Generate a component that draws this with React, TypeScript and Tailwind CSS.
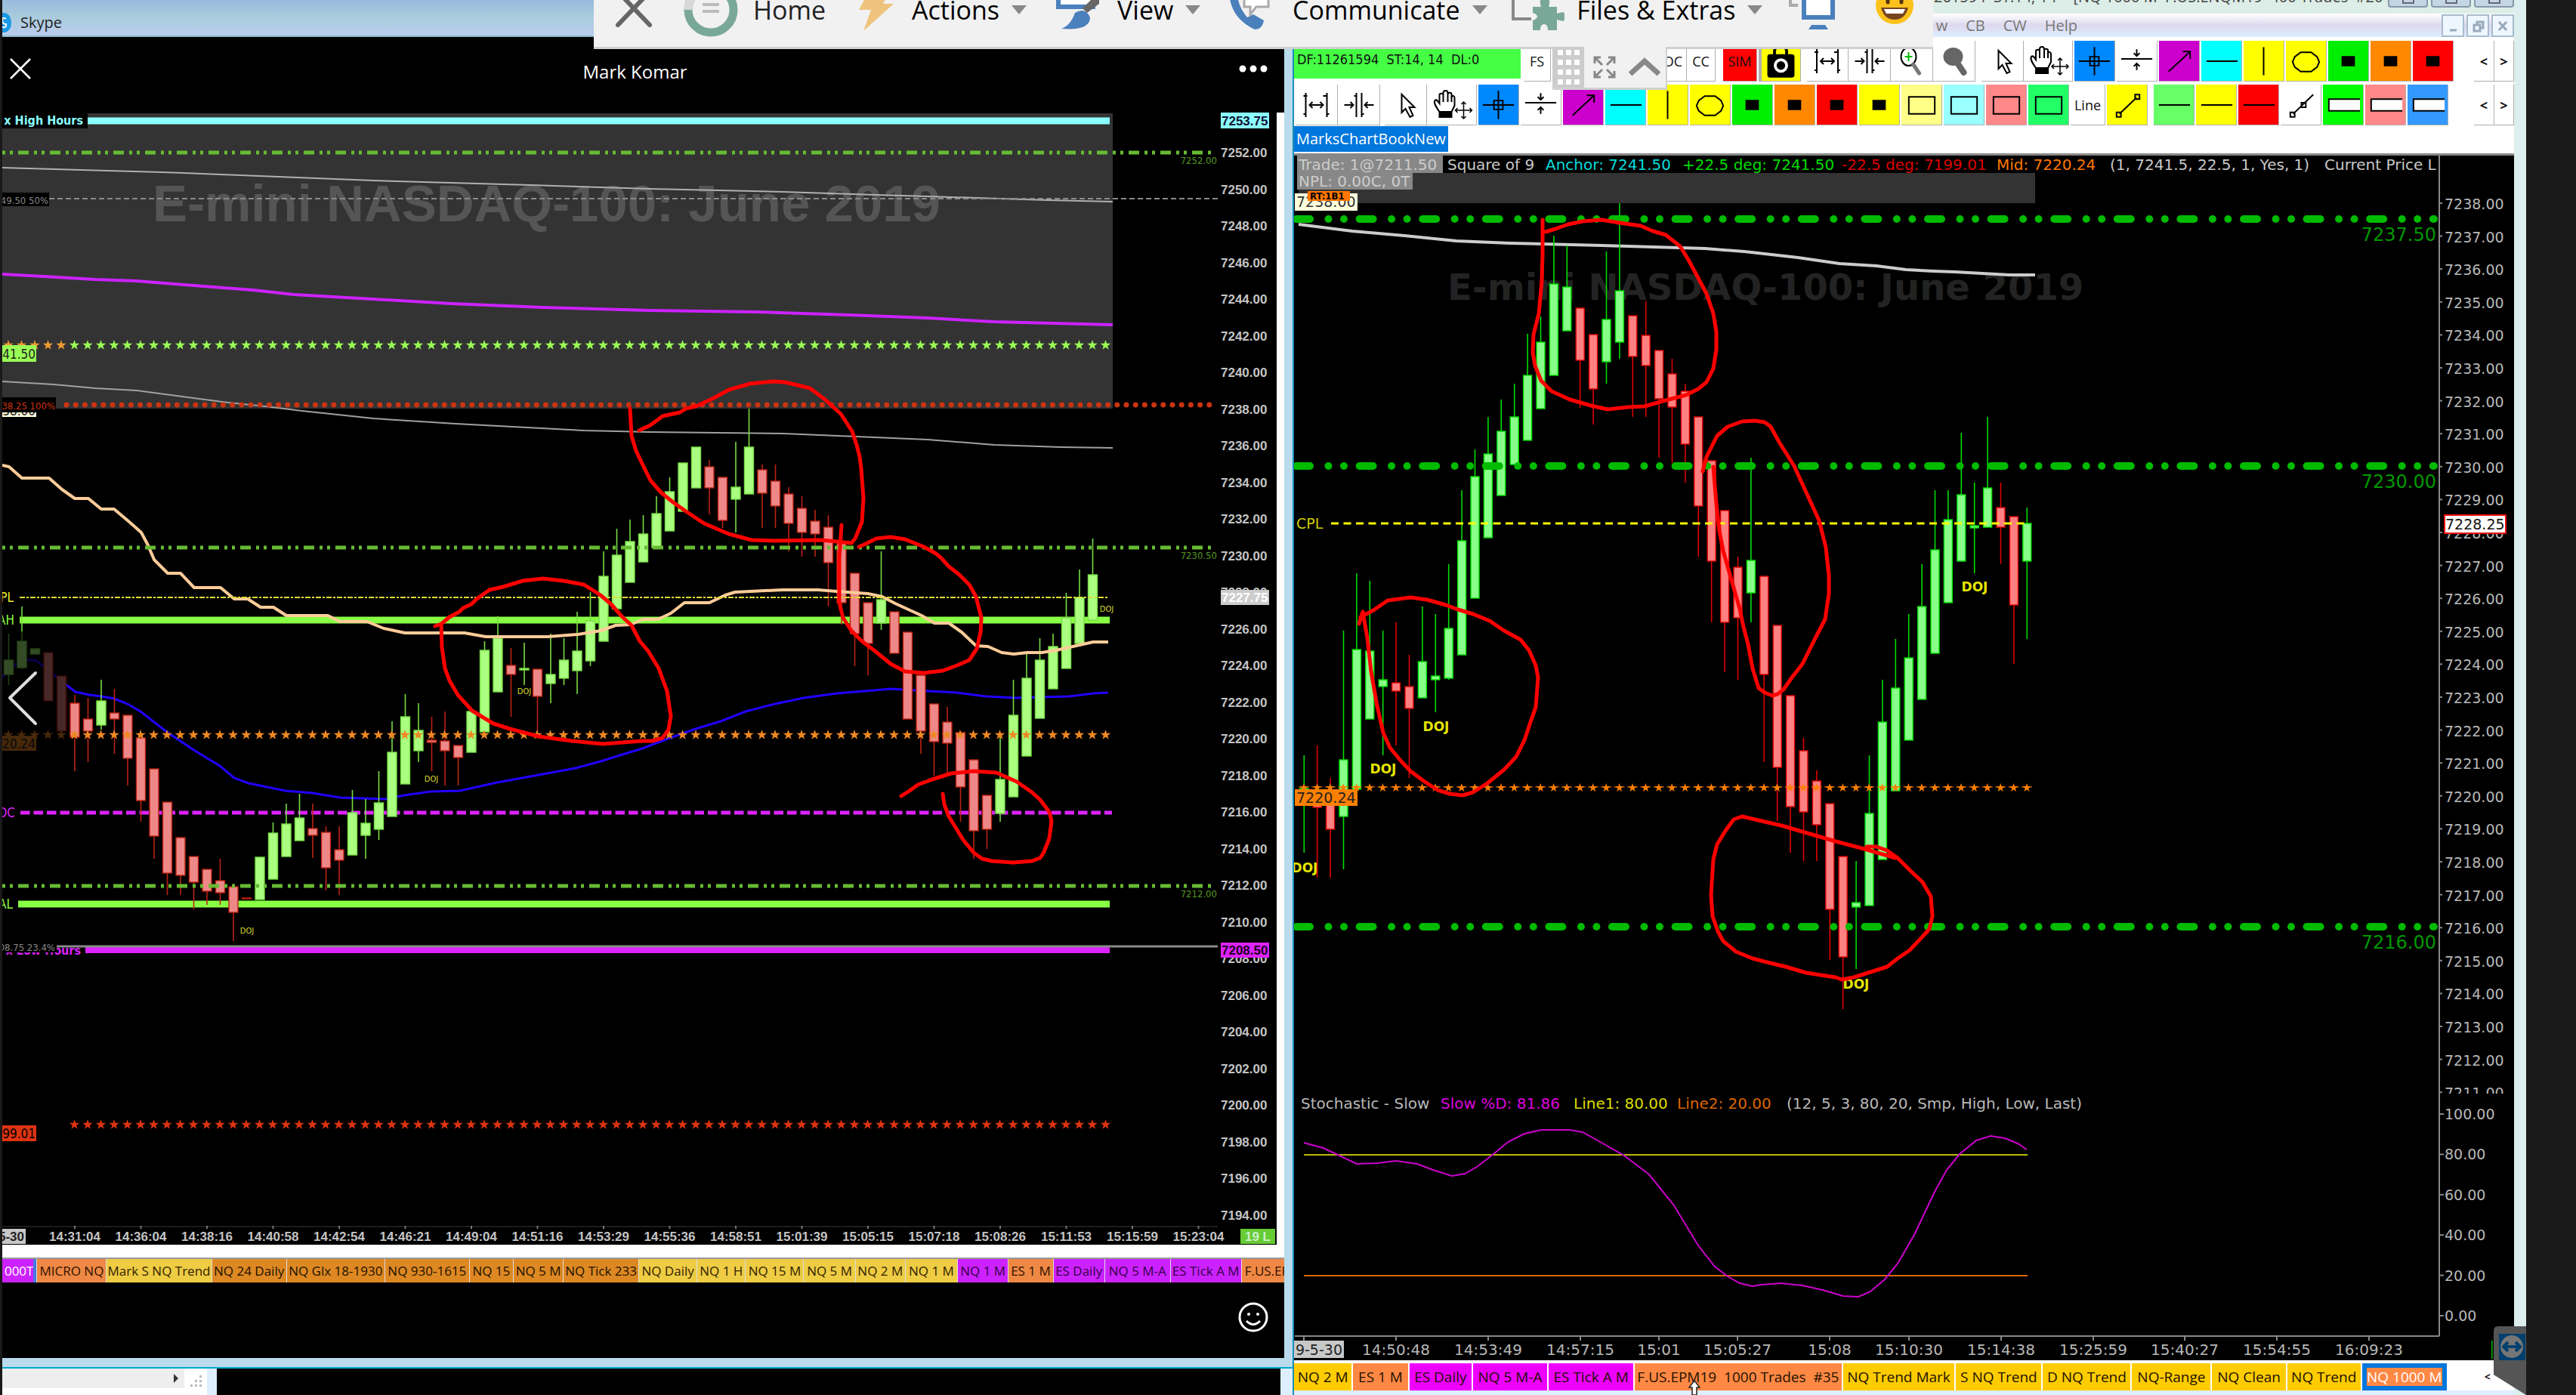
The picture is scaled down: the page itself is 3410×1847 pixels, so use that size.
import React from 'react';

type Dir = 'u' | 'd';
// [direction, high, body top, body bottom, low]
type Bar = [Dir, number, number, number, number];

const TAHOMA = "font-['DejaVu_Sans_Condensed','DejaVu_Sans',sans-serif]";
const VERDANA = "font-['DejaVu_Sans',sans-serif]";
const SEGOE = "font-['Open_Sans','Noto_Sans',sans-serif]";
const ARIAL = "font-['Liberation_Sans',Arial,sans-serif]";

const leftBars: Bar[] = [
  ['u', 839, 874, 893, 907], ['u', 803, 849, 884, 886], ['u', 859, 859, 866, 866], ['d', 864, 864, 928, 928],
  ['d', 895, 895, 968, 968], ['d', 920, 931, 976, 1021], ['d', 924, 952, 968, 1009], ['u', 900, 928, 960, 966],
  ['d', 912, 944, 952, 998], ['d', 947, 947, 1004, 1040], ['d', 977, 977, 1060, 1088], ['d', 1018, 1018, 1107, 1137],
  ['d', 1062, 1062, 1156, 1185], ['d', 1109, 1109, 1159, 1185], ['d', 1134, 1134, 1168, 1204], ['d', 1151, 1151, 1180, 1198],
  ['d', 1137, 1166, 1182, 1198], ['d', 1170, 1174, 1208, 1246], ['d', 1189, 1189, 1190, 1190], ['u', 1135, 1135, 1191, 1191],
  ['u', 1089, 1103, 1164, 1164], ['u', 1064, 1091, 1134, 1134], ['u', 1051, 1083, 1113, 1113], ['d', 1064, 1097, 1106, 1136],
  ['d', 1094, 1102, 1149, 1179], ['d', 1094, 1125, 1139, 1185], ['u', 1046, 1076, 1132, 1132], ['u', 1058, 1090, 1106, 1137],
  ['u', 1021, 1063, 1098, 1112], ['u', 955, 996, 1081, 1081], ['u', 919, 949, 1038, 1038], ['u', 931, 967, 994, 1009],
  ['d', 949, 980, 983, 1021], ['d', 942, 981, 994, 1040], ['d', 987, 987, 1003, 1040], ['u', 942, 942, 996, 996],
  ['u', 849, 861, 969, 969], ['u', 816, 845, 916, 916], ['d', 858, 881, 893, 949], ['u', 851, 885, 887, 907],
  ['d', 886, 886, 922, 970], ['u', 839, 893, 905, 931], ['u', 845, 874, 898, 907], ['u', 810, 862, 888, 919],
  ['u', 784, 822, 875, 882], ['u', 730, 763, 849, 849], ['u', 700, 735, 806, 806], ['u', 688, 717, 771, 771],
  ['u', 682, 707, 744, 744], ['u', 657, 680, 725, 725], ['u', 632, 651, 703, 703], ['u', 613, 613, 677, 677],
  ['u', 592, 592, 646, 646], ['d', 609, 618, 646, 681], ['d', 632, 632, 689, 699], ['u', 585, 645, 661, 705],
  ['u', 541, 592, 654, 654], ['d', 615, 622, 653, 699], ['d', 615, 637, 670, 699], ['d', 645, 654, 693, 730],
  ['d', 657, 673, 705, 737], ['d', 675, 690, 707, 737], ['d', 682, 698, 745, 803], ['d', 719, 719, 798, 827],
  ['d', 759, 759, 839, 882], ['d', 798, 798, 852, 894], ['u', 730, 794, 825, 834], ['d', 810, 810, 865, 865],
  ['d', 837, 837, 952, 952], ['d', 894, 894, 968, 998], ['d', 932, 932, 982, 1027], ['d', 936, 956, 984, 1023],
  ['d', 970, 970, 1042, 1088], ['d', 1006, 1006, 1100, 1137], ['d', 1053, 1053, 1098, 1124], ['u', 976, 1032, 1077, 1088],
  ['u', 900, 947, 1055, 1055], ['u', 866, 898, 1001, 1001], ['u', 845, 874, 951, 951], ['u', 839, 856, 912, 912],
  ['u', 785, 818, 885, 885], ['u', 754, 791, 852, 852], ['u', 713, 761, 821, 821],
];

const rightBars: Bar[] = [
  ['u', 1000, 1044, 1062, 1129], ['d', 987, 1047, 1069, 1162], ['d', 1030, 1051, 1098, 1162], ['u', 835, 1006, 1081, 1151],
  ['u', 759, 860, 1045, 1045], ['u', 769, 862, 952, 952], ['u', 835, 900, 909, 1000], ['d', 824, 904, 915, 987],
  ['d', 867, 909, 938, 1030], ['u', 803, 876, 924, 924], ['u', 813, 895, 900, 943], ['u', 747, 832, 898, 900],
  ['u', 649, 716, 867, 867], ['u', 595, 631, 792, 792], ['u', 552, 601, 712, 712], ['u', 529, 571, 656, 656],
  ['u', 508, 552, 615, 615], ['u', 442, 497, 583, 583], ['u', 419, 453, 541, 541], ['u', 312, 376, 497, 497],
  ['u', 325, 380, 438, 438], ['d', 408, 408, 477, 540], ['d', 443, 443, 515, 562], ['u', 333, 423, 479, 508],
  ['u', 269, 385, 453, 475], ['d', 418, 418, 472, 552], ['d', 399, 444, 484, 552], ['d', 464, 464, 528, 606],
  ['d', 475, 495, 539, 613], ['d', 508, 518, 588, 639], ['d', 552, 552, 670, 737], ['d', 610, 610, 743, 824],
  ['d', 676, 676, 824, 890], ['d', 737, 751, 818, 900], ['u', 606, 742, 785, 824], ['d', 763, 763, 893, 1009],
  ['d', 828, 828, 1016, 1087], ['d', 921, 921, 1068, 1129], ['d', 977, 994, 1075, 1140], ['d', 1020, 1034, 1092, 1140],
  ['d', 1064, 1064, 1204, 1271], ['d', 1134, 1134, 1267, 1336], ['u', 1140, 1195, 1201, 1283], ['u', 1000, 1077, 1199, 1199],
  ['u', 900, 956, 1138, 1138], ['u', 846, 911, 1047, 1047], ['u', 813, 871, 980, 980], ['u', 747, 803, 926, 926],
  ['u', 649, 728, 865, 865], ['u', 649, 688, 798, 798], ['u', 573, 655, 743, 743], ['u', 639, 696, 699, 759],
  ['u', 552, 646, 698, 698], ['d', 639, 672, 698, 747], ['d', 684, 684, 801, 879], ['u', 672, 693, 743, 846],
];

const leftInk = [
  '834,541 836,577 842,597 855,624 861,636 875,652 891,665 908,677 932,693 965,707 995,715 1025,716 1086,715 1108,717 1127,719 1132,713 1141,691 1143,660 1140,620 1138,605 1134,589 1128,571 1113,548 1091,528 1072,514 1056,510 1039,506 1023,505 993,508 965,516 943,528 921,538 908,541 900,546 877,551 861,563 846,570',
  '576,829 584,826 595,817 608,810 613,805 624,800 631,793 648,781 666,777 692,769 719,766 746,769 773,774 795,788 809,800 823,816 836,828 847,849 858,862 872,885 883,915 888,948 885,966 877,977 864,981 850,981 798,985 757,981 713,975 675,965 653,958 625,941 606,920 595,901 589,885 585,857 584,826',
  '1114,695 1111,739 1111,798 1116,818 1127,835 1141,849 1157,861 1179,879 1198,889 1223,891 1248,888 1267,881 1283,874 1293,859 1298,837 1299,818 1292,790 1283,774 1270,761 1256,750 1246,739 1239,733 1223,724 1198,714 1179,711 1160,713 1146,720 1137,724',
  '1193,1054 1204,1047 1215,1039 1234,1032 1259,1024 1289,1021 1319,1023 1346,1035 1366,1049 1377,1059 1389,1075 1392,1087 1389,1110 1382,1128 1377,1136 1366,1140 1341,1142 1313,1140 1300,1137 1289,1129 1275,1112 1264,1094 1256,1081 1250,1065 1248,1051',
];

const rightInk = [
  '2042,291 2042,336 2041,372 2037,415 2030,443 2029,467 2032,484 2040,504 2054,518 2078,529 2106,537 2128,542 2155,539 2177,538 2205,530 2232,523 2248,515 2259,506 2268,488 2272,463 2272,439 2268,415 2259,389 2248,368 2235,344 2224,326 2205,311 2188,306 2172,299 2144,295 2120,291 2095,293 2076,297 2059,303 2046,307',
  '2254,624 2259,605 2273,577 2287,565 2306,558 2323,557 2336,559 2344,565 2355,585 2375,617 2391,652 2408,689 2417,725 2421,762 2421,786 2416,820 2405,841 2397,857 2386,879 2372,897 2361,913 2353,919 2346,921 2336,917 2328,911 2320,885 2314,853 2307,826 2303,806 2292,768 2281,729 2276,703 2272,667 2268,618',
  '1799,826 1804,810 1810,845 1815,889 1822,930 1831,970 1840,990 1854,1007 1867,1021 1886,1035 1903,1046 1919,1051 1936,1053 1950,1049 1969,1037 1991,1019 2007,1002 2018,980 2026,956 2033,936 2036,897 2033,881 2024,861 2013,847 1991,835 1972,822 1950,813 1930,807 1914,801 1889,794 1867,791 1837,795 1818,808 1801,817',
  '2509,1136 2468,1124 2430,1114 2358,1093 2306,1081 2295,1085 2284,1100 2273,1118 2268,1138 2265,1185 2267,1213 2274,1233 2281,1246 2298,1260 2320,1269 2339,1274 2364,1280 2391,1288 2430,1294 2438,1297 2454,1294 2498,1280 2512,1269 2528,1258 2545,1240 2554,1230 2558,1213 2556,1187 2545,1168 2528,1152 2512,1136 2498,1126 2484,1121 2471,1121',
];

const leftTimes = ['14:31:04', '14:36:04', '14:38:16', '14:40:58', '14:42:54', '14:46:21', '14:49:04', '14:51:16', '14:53:29', '14:55:36', '14:58:51', '15:01:39', '15:05:15', '15:07:18', '15:08:26', '15:11:53', '15:15:59', '15:23:04'];

const rightTimes: [number, string][] = [
  [1848, '14:50:48'], [1970, '14:53:49'], [2092, '14:57:15'], [2196, '15:01'], [2300, '15:05:27'], [2422, '15:08'],
  [2527, '15:10:30'], [2649, '15:14:38'], [2771, '15:25:59'], [2892, '15:40:27'], [3014, '15:54:55'], [3136, '16:09:23'],
];

const starPath = (x: number, y: number, r: number) => {
  const pts: string[] = [];
  for (let i = 0; i < 10; i++) {
    const a = (Math.PI / 5) * i - Math.PI / 2;
    const rad = i % 2 ? r * 0.4 : r;
    pts.push(`${(x + rad * Math.cos(a)).toFixed(1)},${(y + rad * Math.sin(a)).toFixed(1)}`);
  }
  return `M${pts.join('L')}Z`;
};

const Stars = ({ from, to, x0, step, y, color, r = 7 }: { from: number; to: number; x0: number; step: number; y: number; color: string; r?: number }) => (
  <path
    fill={color}
    d={Array.from({ length: to - from + 1 }, (_, i) => starPath(x0 + (from + i) * step, y, r)).join('')}
  />
);

const Candles = ({ bars, x0, step, width, up, down }: { bars: Bar[]; x0: number; step: number; width: number; up: [string, string]; down: [string, string] }) => (
  <g>
    {bars.map(([dir, high, top, bottom, low], i) => {
      const x = x0 + i * step;
      const [fill, line] = dir === 'u' ? up : down;
      return (
        <g key={i}>
          {low > high + 1 && <line x1={x} x2={x} y1={high} y2={low} stroke={line} strokeWidth={1.6} />}
          <rect x={x - width / 2} y={top} width={width} height={Math.max(bottom - top, 1)} fill={fill} stroke={line} strokeWidth={1.4} />
        </g>
      );
    })}
  </g>
);

const Ink = ({ strokes }: { strokes: string[] }) => (
  <g fill="none" stroke="#ff0000" strokeWidth={5} strokeLinecap="round" strokeLinejoin="round">
    {strokes.map((s) => (
      <polyline key={s} points={s} />
    ))}
  </g>
);

const LeftChart = () => (
  <svg viewBox="3 149 1687 1499" className="block min-w-0 flex-1 bg-black" role="img" aria-label="E-mini NASDAQ-100 shared chart">
    <rect x={3} y={150} width={1470} height={391} fill="#333333" />
    <text x={202} y={293} fontSize={69} fontWeight={700} fill="#555555" className={ARIAL}>E-mini NASDAQ-100: June 2019</text>

    {/* levels inside the shaded session */}
    <line x1={116} x2={1469} y1={160} y2={160} stroke="#8bffff" strokeWidth={9} />
    <polyline fill="none" stroke="#b0b0b0" strokeWidth={2} points="3,222 107,225 214,228 318,232 494,239 702,245 860,250 1036,254 1159,258 1228,260 1387,265 1473,267" />
    <line x1={65} x2={1612} y1={263} y2={263} stroke="#8a8a8a" strokeWidth={2} strokeDasharray="7 4" />
    <polyline fill="none" stroke="#cc22ff" strokeWidth={4} points="3,363 58,366 126,370 181,372 269,379 335,384 389,390 494,396 598,402 719,407 860,411 1001,413 1124,417 1228,421 1316,426 1473,430" />
    <Stars from={0} to={4} x0={11} step={17.5} y={457} color="#ee9933" />
    <Stars from={5} to={83} x0={11} step={17.5} y={457} color="#99ff55" />
    <polyline fill="none" stroke="#a0a0a0" strokeWidth={2} points="3,505 71,509 126,514 181,517 241,525 302,533 351,538 400,544 494,554 603,561 773,570 860,572 1036,574 1157,579 1228,582 1316,589 1404,592 1473,593" />
    <line x1={88} x2={1612} y1={536} y2={536} stroke="#cc3311" strokeWidth={7} strokeLinecap="round" strokeDasharray="0 12.2" />

    {/* solid value lines */}
    <line x1={26} x2={1469} y1={821} y2={821} stroke="#88ff44" strokeWidth={9} />
    <line x1={24} x2={1469} y1={1197} y2={1197} stroke="#88ff44" strokeWidth={9} />
    <line x1={27} x2={1472} y1={1076} y2={1076} stroke="#dd22ff" strokeWidth={5} strokeDasharray="12.5 5" />
    <line x1={113} x2={1469} y1={1258} y2={1258} stroke="#dd22ff" strokeWidth={8} />
    <line x1={75} x2={1612} y1={1253} y2={1253} stroke="#888888" strokeWidth={3} />
    <polyline fill="none" stroke="#2200ff" strokeWidth={3} points="0,899 22,879 33,874 47,874 71,893 88,907 100,916 118,920 134,922 151,925 169,932 186,942 222,970 258,994 291,1014 310,1030 329,1037 378,1047 414,1050 450,1056 510,1058 535,1053 570,1048 609,1047 658,1036 713,1026 762,1017 795,1008 850,991 887,977 921,965 954,955 987,942 1026,932 1064,924 1108,918 1157,914 1179,912 1228,915 1267,917 1305,922 1344,924 1415,922 1448,918 1467,917" />

    <Candles bars={leftBars} x0={11.5} step={17.5} width={12} up={['#aaff80', '#77dd44']} down={['#ee8888', '#bb2211']} />
    <polyline fill="none" stroke="#ffcc99" strokeWidth={4} strokeLinejoin="round" points="3,616 12,618 29,633 65,633 82,648 99,660 117,660 134,674 151,674 170,690 187,705 196,722 204,741 222,759 239,759 257,778 292,778 310,793 328,793 345,804 362,804 379,815 434,815 450,823 486,823 508,832 536,838 615,838 643,843 725,843 765,840 795,835 815,828 835,827 851,820 871,820 888,812 906,798 939,798 960,788 973,784 1036,781 1083,781 1108,783 1149,786 1168,790 1185,799 1220,815 1237,825 1256,825 1273,837 1292,855 1308,856 1326,864 1342,866 1360,864 1379,864 1398,861 1420,856 1447,850 1467,850" />
    {[202, 725, 1173].map((y) => (
      <line key={y} x1={-18} x2={1606} y1={y} y2={y} stroke="#66bb33" strokeWidth={5} strokeDasharray="14 7 4 6 4 7" />
    ))}
    <line x1={26} x2={1466} y1={791} y2={791} stroke="#dddd33" strokeWidth={2} strokeDasharray="7 2 3 2" />
    <Stars from={0} to={83} x0={11} step={17.5} y={973} color="#ee8822" />
    <Stars from={5} to={83} x0={11} step={17.5} y={1489} color="#dd3311" />

    {/* tags pinned to the left edge */}
    <g className={TAHOMA} fontSize={17}>
      <rect x={3} y={150} width={113} height={20} fill="#000" />
      <text x={110} y={165} textAnchor="end" fontSize={16} fontWeight={700} fill="#8bffff">x High Hours</text>
      <rect x={3} y={255} width={62} height={18} fill="#000" />
      <text x={64} y={270} textAnchor="end" fontSize={13} fill="#888">49.50 50%</text>
      <rect x={3} y={457} width={45} height={22} fill="#99ff55" />
      <text x={47} y={475} textAnchor="end" fill="#222">41.50</text>
      <rect x={3} y={536} width={45} height={16} fill="#ffffdd" />
      <text x={47} y={550} textAnchor="end" fill="#222">38.00</text>
      <rect x={3} y={526} width={71} height={20} fill="#000" />
      <text x={73} y={542} textAnchor="end" fontSize={13} fill="#cc3311">38.25 100%</text>
      <rect x={3} y={974} width={45} height={20} fill="#ee8822" />
      <text x={47} y={991} textAnchor="end" fill="#222">20.24</text>
      <rect x={3} y={836} width={85} height={176} fill="#000" opacity={0.7} />
      <text x={18} y={797} textAnchor="end" fill="#eeee33">CPL</text>
      <text x={19} y={827} textAnchor="end" fill="#88ff44">VAH</text>
      <text x={20} y={1082} textAnchor="end" fill="#dd22ff">POC</text>
      <text x={17} y={1203} textAnchor="end" fill="#88ff44">VAL</text>
      <text x={107} y={1264} textAnchor="end" fontSize={16} fontWeight={700} fill="#dd22ff">x Low Hours</text>
      <rect x={3} y={1247} width={72} height={14} fill="#000" />
      <text x={73} y={1259} textAnchor="end" fontSize={13} fill="#888">08.75 23.4%</text>
      <rect x={3} y={1490} width={45} height={21} fill="#dd3311" />
      <text x={47} y={1507} textAnchor="end" fill="#000">99.01</text>
    </g>
    <g className={TAHOMA} fontSize={11} fill="#dddd33" textAnchor="middle">
      <text x={327} y={1236}>DOJ</text>
      <text x={571} y={1035}>DOJ</text>
      <text x={694} y={919}>DOJ</text>
      <text x={1465} y={810}>DOJ</text>
    </g>
    <g className={TAHOMA} fontSize={13} fill="#559922" textAnchor="end">
      <text x={1611} y={217}>7252.00</text>
      <text x={1611} y={740}>7230.50</text>
      <text x={1611} y={1188}>7212.00</text>
    </g>
    <polyline points="47,891 13,924 47,958" fill="none" stroke="#dddddd" strokeWidth={4} strokeLinecap="round" strokeLinejoin="round" />

    {/* price axis */}
    <g className={ARIAL} fontSize={17} fontWeight={700} fill="#c4c4c4">
      {Array.from({ length: 30 }, (_, i) => (
        <text key={i} x={1616} y={208 + i * 48.5}>{(7252 - i * 2).toFixed(2)}</text>
      ))}
      <rect x={1616} y={149} width={64} height={21} fill="#8bffff" />
      <text x={1617} y={166} fill="#113">7253.75</text>
      <rect x={1616} y={781} width={64} height={20} fill="#cccccc" />
      <text x={1617} y={797} fill="#fff">7227.75</text>
      <rect x={1616} y={1248} width={64} height={20} fill="#dd22ff" />
      <text x={1617} y={1264} fill="#200020">7208.50</text>
    </g>
    {/* time axis */}
    <line x1={3} x2={1612} y1={1624} y2={1624} stroke="#1c1c1c" strokeWidth={2} />
    <g className={ARIAL} fontSize={17} fontWeight={700} fill="#c4c4c4" textAnchor="middle">
      {leftTimes.map((t, i) => (
        <g key={t}>
          <line x1={99 + i * 87.5} x2={99 + i * 87.5} y1={1623} y2={1627} stroke="#777" strokeWidth={2} />
          <text x={99 + i * 87.5} y={1643}>{t}</text>
        </g>
      ))}
      <rect x={3} y={1627} width={31} height={20} fill="#c8c8c8" />
      <text x={32} y={1643} textAnchor="end" fill="#222">5-30</text>
      <rect x={1642} y={1627} width={46} height={20} fill="#66cc33" />
      <text x={1665} y={1643} fill="#cceecc">19 L</text>
    </g>
    <Ink strokes={leftInk} />
  </svg>
);

const RightChart = () => (
  <svg viewBox="1713 206 1615 1595" className="block w-full bg-black" role="img" aria-label="E-mini NASDAQ-100 chart">
    <defs>
      <clipPath id="scale-clip">
        <rect x={3228} y={206} width={100} height={1242} />
      </clipPath>
    </defs>
    <text x={1916} y={397} fontSize={48} fontWeight={700} fill="#232323" className={VERDANA}>E-mini NASDAQ-100: June 2019</text>
    <rect x={1719} y={229} width={975} height={40} fill="#333333" />

    <polyline fill="none" stroke="#cccccc" strokeWidth={4} points="1719,297 1790,306 1859,312 1928,319 1999,322 2120,325 2257,329 2309,333 2380,341 2435,349 2484,352 2523,357 2560,359 2588,360 2624,362 2660,364 2694,364" />
    <Candles bars={rightBars} x0={1726.3} step={17.4} width={11} up={['#88ff88', '#00dd00']} down={['#ff8080', '#dd0000']} />
    {[290, 617, 1227].map((y) => (
      <line key={y} x1={1716} x2={3222} y1={y} y2={y} stroke="#00bb00" strokeWidth={10} strokeLinecap="round" strokeDasharray="18 24.5 0 20.5 0 20.6" />
    ))}
    <line x1={1762} x2={2686} y1={693} y2={693} stroke="#ffff00" strokeWidth={3} strokeDasharray="10 6.5" />
    <Stars from={0} to={55} x0={1726} step={17.4} y={1043} color="#ff7f00" r={6} />
    <line x1={1719} x2={2690} y1={1042} y2={1042} stroke="#ff7f00" strokeWidth={1} strokeDasharray="14 3.4" />

    {/* study header */}
    <g className={VERDANA} fontSize={20}>
      <rect x={1717} y={206} width={193} height={23} fill="#888888" />
      <rect x={1717} y={229} width={153} height={22} fill="#888888" />
      <text x={1719} y={225} fill="#cccccc">Trade: 1@7211.50</text>
      <text x={1719} y={247} fill="#cccccc">NPL: 0.00C, 0T</text>
      <text x={1916} y={225} fill="#c8c8c8">Square of 9</text>
      <text x={2046} y={225} fill="#00dddd">Anchor: 7241.50</text>
      <text x={2227} y={225} fill="#00dd00">+22.5 deg: 7241.50</text>
      <text x={2438} y={225} fill="#dd0000">-22.5 deg: 7199.01</text>
      <text x={2643} y={225} fill="#ff7700">Mid: 7220.24</text>
      <text x={2793} y={225} fill="#c8c8c8">(1, 7241.5, 22.5, 1, Yes, 1)</text>
      <text x={3077} y={225} fill="#c8c8c8">Current Price L</text>
    </g>
    <g className={VERDANA} fontSize={19}>
      <rect x={1714} y={256} width={83} height={23} fill="#ffffdd" />
      <text x={1716} y={274} fill="#333">7238.00</text>
      <rect x={1731} y={253} width={56} height={13} fill="#ff7700" />
      <text x={1734} y={264} fontSize={13} fontWeight={700} fill="#000" className={TAHOMA}>RT:1B1</text>
      <text x={1716} y={700} fill="#cccc00">CPL</text>
      <rect x={1714} y={1045} width={83} height={22} fill="#ff7f00" />
      <text x={1716} y={1063} fill="#222">7220.24</text>
    </g>
    <g className={VERDANA} fontSize={17} fontWeight={700} fill="#e6e600" textAnchor="middle">
      <text x={1727} y={1155}>DOJ</text>
      <text x={1831} y={1024}>DOJ</text>
      <text x={1901} y={968}>DOJ</text>
      <text x={2457} y={1309}>DOJ</text>
      <text x={2614} y={783}>DOJ</text>
    </g>
    <g className={VERDANA} fontSize={24} fill="#009900" textAnchor="end">
      <text x={3225} y={319}>7237.50</text>
      <text x={3225} y={646}>7230.00</text>
      <text x={3225} y={1256}>7216.00</text>
    </g>

    {/* stochastic */}
    <g className={VERDANA} fontSize={20}>
      <text x={1722} y={1468} fill="#b8b8b8">Stochastic - Slow</text>
      <text x={1907} y={1468} fill="#dd00dd">Slow %D: 81.86</text>
      <text x={2083} y={1468} fill="#dddd00">Line1: 80.00</text>
      <text x={2220} y={1468} fill="#dd6600">Line2: 20.00</text>
      <text x={2365} y={1468} fill="#b8b8b8">(12, 5, 3, 80, 20, Smp, High, Low, Last)</text>
    </g>
    <line x1={1726} x2={2684} y1={1529} y2={1529} stroke="#bbbb00" strokeWidth={2} />
    <line x1={1726} x2={2684} y1={1689} y2={1689} stroke="#dd6600" strokeWidth={2} />
    <polyline fill="none" stroke="#cc00cc" strokeWidth={2} points="1726,1513 1752,1520 1771,1529 1796,1541 1823,1540 1848,1537 1876,1541 1897,1549 1922,1557 1939,1554 1955,1545 1977,1528 1996,1512 2018,1501 2040,1496 2078,1496 2095,1499 2122,1514 2150,1530 2183,1555 2216,1596 2248,1649 2270,1677 2287,1690 2303,1699 2320,1703 2331,1701 2358,1699 2386,1702 2413,1708 2440,1716 2460,1717 2476,1710 2495,1694 2512,1673 2534,1635 2561,1578 2577,1549 2594,1528 2616,1510 2635,1504 2654,1507 2671,1514 2683,1522" />

    {/* axes */}
    <path d="M3229 206V1769M1714 1769H3229" stroke="#888" strokeWidth={2} fill="none" />
    <g className={VERDANA} fontSize={19} fill="#b8b8b8">
      <g clipPath="url(#scale-clip)">
        {Array.from({ length: 28 }, (_, i) => (
          <g key={i}>
            <line x1={3229} x2={3233} y1={269 + i * 43.6} y2={269 + i * 43.6} stroke="#888" strokeWidth={2} />
            <text x={3236} y={277 + i * 43.6}>{(7238 - i).toFixed(2)}</text>
          </g>
        ))}
      </g>
      {[100, 80, 60, 40, 20, 0].map((v, i) => (
        <g key={v}>
          <line x1={3229} x2={3235} y1={1475 + i * 53.4} y2={1475 + i * 53.4} stroke="#888" strokeWidth={2} />
          <text x={3236} y={1482 + i * 53.4}>{v.toFixed(2)}</text>
        </g>
      ))}
      <rect x={3236} y={682} width={81} height={24} fill="#fff" stroke="#ee1111" strokeWidth={2} />
      <text x={3237} y={701} fill="#111">7228.25</text>
    </g>
    <g className={VERDANA} fontSize={20} fill="#b8b8b8" textAnchor="middle">
      {rightTimes.map(([x, t]) => (
        <g key={t}>
          <line x1={x} x2={x} y1={1770} y2={1775} stroke="#888" strokeWidth={2} />
          <text x={x} y={1794}>{t}</text>
        </g>
      ))}
      <rect x={1713} y={1775} width={66} height={23} fill="#c8c8c8" />
      <text x={1777} y={1794} textAnchor="end" fontSize={19} fill="#222">9-5-30</text>
    </g>
    <line x1={1726} x2={1726} y1={1770} y2={1775} stroke="#888" strokeWidth={2} />
    <Ink strokes={rightInk} />
  </svg>
);

type IconName = 'widen' | 'narrow' | 'pointer' | 'hand' | 'cross' | 'split' | 'ray' | 'hline' | 'vline' | 'ellipse' | 'dot' | 'box' | 'segment' | 'extended' | 'channel' | 'zoomIn' | 'zoom' | 'lock';

const glyphs: Record<IconName, React.ReactNode> = {
  widen: <path d="M13 8v32M10 36h3M10 12h5M41 8v32M44 36h-3M41 12h-5M18 24h18M22 20l-4 4 4 4M32 20l4 4-4 4" />,
  narrow: <path d="M24 8v32M31 8v32M24 12h-3M31 36h3M8 24h12M16 20l4 4-4 4M47 24H35M39 20l-4 4 4 4" />,
  pointer: <path d="M22 10v24l5-5 6 11 4-2-5-11h7z" />,
  hand: (
    <>
      <path d="M15 33C10 26 7 21 9 18c2-2 4 1 6 4V11c0-3 5-3 5 0V8c0-4 6-4 6 0v2c0-3 5-3 5 0v4c0-3 4-3 4 1v10l-4 8" fill="#fff" />
      <path d="M20 11v9M26 10v10M31 13v7" />
      <path d="M15 33h16v7H15z" fill="#000" />
      <path d="M47 20v22M36 31h22M44 23l3-3 3 3M44 39l3 3 3-3M39 28l-3 3 3 3M55 28l3 3-3 3" strokeWidth={1.5} />
    </>
  ),
  cross: <path d="M6 24h42M27 5v38M21 18h12v12H21z" />,
  split: <path d="M6 21h42M27 8v9M23 13l4 4 4-4M27 36v-9M23 31l4-4 4 4" />,
  ray: <path d="M13 38L42 11M32 11h10v10" />,
  hline: <path d="M7 24h42" />,
  vline: <path d="M27 5v38" />,
  ellipse: <path d="M20 12h14l8 6 3 7-3 7-8 6H20l-8-6-3-7 3-7z" />,
  dot: <path d="M19 18h16v12H19z" fill="#000" />,
  box: <path d="M10 13h35v23H10z" />,
  segment: <path d="M17 36L40 14M13 34h6v6h-6zM38 10h6v6h-6z" />,
  extended: <path d="M17 36L44 10M13 34h6v6h-6zM28 21h6v6h-6z" />,
  channel: (
    <>
      <path d="M8 16h42v16H8z" fill="#fff" stroke="none" />
      <path d="M50 16H8v16h42" />
    </>
  ),
  zoomIn: (
    <>
      <ellipse cx="23" cy="18" rx="10" ry="12" fill="#fff" />
      <path d="M23 12v12M18 18h10" stroke="#0b0" />
      <path d="M29 28l8 12" stroke="#777" strokeWidth="5" strokeLinecap="round" />
    </>
  ),
  zoom: (
    <>
      <ellipse cx="26" cy="18" rx="13" ry="12" fill="#666" stroke="none" />
      <path d="M32 27l8 12" stroke="#666" strokeWidth="8" strokeLinecap="round" />
    </>
  ),
  lock: (
    <>
      <path d="M18 18V8c0-9 17-9 17 0v10" strokeWidth="4" />
      <rect x="9" y="13" width="36" height="31" rx="3" fill="#000" />
      <circle cx="27" cy="28" r="8" stroke="#fff" strokeWidth="4" />
    </>
  ),
};

const Tool = ({ icon, label, bg = 'bg-white', extra = 'w-[54px]' }: { icon: IconName; label: string; bg?: string; extra?: string }) => (
  <button type="button" aria-label={label} className={`flex h-[54px] shrink-0 items-center justify-center border-r border-b border-[#b0b0b0] ${bg} ${extra}`}>
    <svg viewBox={icon === 'hand' ? '0 0 62 48' : '0 0 54 48'} className="h-12 w-full" fill="none" stroke="#000" strokeWidth={2}>
      {glyphs[icon]}
    </svg>
  </button>
);

const Pager = () => (
  <div className="ml-auto flex h-[54px] shrink-0 border-b border-[#b0b0b0] font-bold">
    <button type="button" className="w-[27px] border-r border-[#b0b0b0]">&lt;</button>
    <button type="button" className="w-[26px] border-r border-[#b0b0b0]">&gt;</button>
  </div>
);

const TextTool = ({ text, cls }: { text: string; cls: string }) => (
  <button type="button" className={`h-[54px] shrink-0 border-r border-b border-[#b0b0b0] text-center ${cls}`}>{text}</button>
);

const gold = 'bg-[#eecc44] text-[#332200]';
const amber = 'bg-[#dd8822] text-[#221100]';
const coral = 'bg-[#ee8844] text-[#331100]';
const violet = 'bg-[#cc22ff] text-[#330044]';

const leftTabs: [string, string][] = [
  ['1000T', 'bg-[#cc22ff] text-white border-r-4 border-[#4477dd]'],
  ['MICRO NQ', coral], ['Mark S NQ Trend', gold], ['NQ 24 Daily', amber], ['NQ Glx 18-1930', amber], ['NQ 930-1615', amber],
  ['NQ 15', amber], ['NQ 5 M', amber], ['NQ Tick 233', amber], ['NQ Daily', gold], ['NQ 1 H', gold], ['NQ 15 M', gold],
  ['NQ 5 M', gold], ['NQ 2 M', gold], ['NQ 1 M', gold], ['NQ 1 M', violet], ['ES 1 M', coral], ['ES Daily', violet],
  ['NQ 5 M-A', violet], ['ES Tick A M', violet], ['F.US.EP', coral],
];

const rightTabs: [string, string][] = [
  ['NQ 2 M', 'bg-[#ffcc00]'], ['ES 1 M', 'bg-[#ff8844]'], ['ES Daily', 'bg-[#ee00ff]'], ['NQ 5 M-A', 'bg-[#ee00ff]'],
  ['ES Tick A M', 'bg-[#ee00ff]'], ['F.US.EPM19  1000 Trades  #35', 'bg-[#ff8844]'], ['NQ Trend Mark', 'bg-[#ffcc00]'],
  ['S NQ Trend', 'bg-[#ffcc00]'], ['D NQ Trend', 'bg-[#ffcc00]'], ['NQ-Range', 'bg-[#ffcc00]'], ['NQ Clean', 'bg-[#ffcc00]'], ['NQ Trend', 'bg-[#ffcc00]'],
];

const SkypeWindow = () => (
  <section className="flex min-w-0 flex-col border-l-[3px] border-[#1a1a1a]">
    <header className="flex h-[49px] items-center gap-2 overflow-hidden border-b-2 border-[#88b8cc] bg-linear-to-b from-[#99bbdd] via-[#aaccdd] to-[#bbccee] pt-3">
      <svg viewBox="0 0 12 26" className="mr-1 h-[26px] w-3">
        <path d="M0 0h4q8 3 8 13t-8 13H0z" fill="#1a9be6" />
        <path d="M5 8Q0 5 0 10t5 5q1 5-5 4" fill="none" stroke="#fff" strokeWidth="2" />
      </svg>
      <h1 className="text-xl text-[#222]">Skype</h1>
    </header>
    <div className="border-r-[11px] border-b-[12px] border-[#b9dbec] bg-black text-white">
      <div className="flex h-[100px] items-center justify-between px-[10px] pb-4">
        <button type="button" aria-label="Close">
          <svg viewBox="0 0 28 28" className="size-7" stroke="#fff" strokeWidth="2.5"><path d="M1 1l26 26M27 1L1 27" /></svg>
        </button>
        <h2 className="pt-2 text-2xl font-medium">Mark Komar</h2>
        <button type="button" aria-label="More" className="mr-3">
          <svg viewBox="0 0 38 10" className="h-[10px] w-[38px]" fill="#fff"><circle cx="5" cy="5" r="4.5" /><circle cx="19" cy="5" r="4.5" /><circle cx="33" cy="5" r="4.5" /></svg>
        </button>
      </div>
      <div className="flex bg-white pr-[10px]">
        <LeftChart />
      </div>
      <div className="h-[19px] border-b-2 border-[#999] bg-white" />
      <nav className="grid h-[31px] grid-cols-[46fr_92fr_140fr_99fr_131fr_112fr_58fr_66fr_100fr_77fr_64fr_77fr_68fr_66fr_69fr_67fr_59fr_68fr_87fr_94fr_57fr] gap-px overflow-hidden bg-[#ddd] text-[17px]">
        {leftTabs.map(([name, cls], i) => (
          <button type="button" key={i} className={`flex min-w-0 items-center overflow-hidden whitespace-nowrap ${i === 0 ? 'justify-end' : i === 20 ? 'pl-1' : 'justify-center'} ${cls}`}>{name}</button>
        ))}
      </nav>
      <footer className="flex h-[100px] items-center justify-end pr-[21px] pb-4">
        <button type="button" aria-label="Emoticons" className="pt-2">
          <svg viewBox="0 0 40 40" className="size-10" fill="none" stroke="#fff" strokeWidth="3">
            <circle cx="20" cy="20" r="18" />
            <path d="M11 25q9 9 18 0" />
            <circle cx="14" cy="16" r="2" fill="#fff" stroke="none" /><circle cx="26" cy="16" r="2" fill="#fff" stroke="none" />
          </svg>
        </button>
      </footer>
    </div>
    <div className="h-0.5 bg-[#00aacc]" />
    <div className="flex flex-1 items-stretch justify-between">
      <div className="flex w-[284px] items-start border-r-[13px] border-[#ddeeff] bg-white">
        <div className="flex h-[26px] flex-1 items-center justify-end bg-[#eeeeee] pr-2">
          <svg viewBox="0 0 6 12" className="h-3 w-[6px]" fill="#333"><path d="M0 0l6 6-6 6z" /></svg>
        </div>
        <svg viewBox="0 0 30 30" className="size-[30px]" fill="#bbb">
          <path d="M20 9h3v3h-3zM14 15h3v3h-3zM20 15h3v3h-3zM8 21h3v3H8zM14 21h3v3h-3zM20 21h3v3h-3z" />
        </svg>
      </div>
      <div className="w-4 bg-[#ddeeff]" />
    </div>
  </section>
);

const TradingWindow = () => (
  <section className="flex min-w-0 flex-col border-r-[16px] border-l-2 border-r-[#dceeee] border-l-[#1a8fb8] bg-[#ddeeff] text-[#111]">
    <header className="flex h-[18px] shrink-0 items-start justify-end overflow-hidden bg-[#ddeee8]">
      <span className={`w-[601px] shrink-0 text-xl leading-none whitespace-pre text-[#444] ${SEGOE}`}>
        <span className="-mt-[14px] block">261594  ST:14, 14  - [NQ 1000 M  F.US.ENQM19  400 Trades  #20 ...</span>
      </span>
      <div className="flex gap-1">
        {['Minimize', 'Maximize', 'Close'].map((n) => (
          <button type="button" key={n} aria-label={n} className="flex h-[10px] w-[53px] items-start justify-center rounded-b border-2 border-t-0 border-[#8899aa] bg-[#c4d6e6]">
            <span className="h-[5px] w-4 border-2 border-t-0 border-[#667]" />
          </button>
        ))}
      </div>
    </header>
    <div className="flex h-[31px] shrink-0 items-center justify-end bg-linear-to-b from-white via-[#ddd8ee] to-[#ddeeff] text-xl">
      <nav className={`flex gap-6 text-[#777] ${SEGOE}`}>
        <a href="#window">w</a><a href="#cb">CB</a><a href="#cw">CW</a><a href="#help">Help</a>
      </nav>
      <div className="ml-[482px] flex gap-[3px]">
        {['M9 19h9', 'M8 12h8v8H8zM12 12V8h8v8h-4', 'M8 8l10 11M18 8L8 19'].map((d) => (
          <button type="button" key={d} aria-label="Chart window" className="h-[30px] w-[30px] border-2 border-[#a8bccc] bg-[#eef6ff]">
            <svg viewBox="0 0 26 26" fill="none" stroke="#99aabb" strokeWidth="3"><path d={d} /></svg>
          </button>
        ))}
      </div>
    </div>
    <div className="flex shrink-0 flex-col gap-1 overflow-hidden bg-white pt-[5px] text-lg">
      <div className="flex">
        <div className={`h-[50px] w-[300px] shrink-0 bg-[#44ff44] pt-4 pl-1 leading-none whitespace-pre ${TAHOMA}`}>DF:11261594  ST:14, 14  DL:0</div>
        <TextTool text="FS" cls="ml-1 w-9" />
        <TextTool text="OC" cls="ml-[144px] w-9" />
        <TextTool text="CC" cls="w-[38px]" />
        <TextTool text="SIM" cls="ml-[10px] w-[45px] bg-[#ff0000]" />
        <Tool icon="lock" label="Lock" bg="bg-[#ffff00]" extra="ml-0.5 w-[56px] border-4 border-[#33cc44]" />
        <Tool icon="widen" label="Widen bars" extra="ml-2 w-[55px]" />
        <Tool icon="narrow" label="Narrow bars" extra="w-14" />
        <Tool icon="zoomIn" label="Zoom in" extra="w-14" />
        <Tool icon="zoom" label="Zoom" extra="w-14" />
        <Tool icon="pointer" label="Pointer" extra="ml-2 w-14" />
        <Tool icon="hand" label="Pan" extra="w-[65px]" />
        <div className="ml-0.5 flex gap-0.5">
          <Tool icon="cross" label="Crosshair" bg="bg-[#0088ff]" />
          <Tool icon="split" label="Split" />
          <Tool icon="ray" label="Ray" bg="bg-[#cc00cc]" />
          <Tool icon="hline" label="Horizontal line" bg="bg-[#00ffff]" />
          <Tool icon="vline" label="Vertical line" bg="bg-[#ffff00]" />
          <Tool icon="ellipse" label="Ellipse" bg="bg-[#ffff00]" />
          <Tool icon="dot" label="Green marker" bg="bg-[#00ee00]" />
          <Tool icon="dot" label="Orange marker" bg="bg-[#ff8800]" />
          <Tool icon="dot" label="Red marker" bg="bg-[#ff0000]" />
        </div>
        <Pager />
      </div>
      <div className="flex">
        <Tool icon="widen" label="Widen bars" extra="ml-0.5 w-14" />
        <Tool icon="narrow" label="Narrow bars" extra="w-14" />
        <Tool icon="pointer" label="Pointer" extra="ml-1.5 w-14" />
        <Tool icon="hand" label="Pan" extra="w-[66px]" />
        <div className="ml-0.5 flex gap-0.5">
          <Tool icon="cross" label="Crosshair" bg="bg-[#0088ff]" />
          <Tool icon="split" label="Split" />
          <Tool icon="ray" label="Ray" bg="bg-[#cc00cc]" />
          <Tool icon="hline" label="Horizontal line" bg="bg-[#00ffff]" />
          <Tool icon="vline" label="Vertical line" bg="bg-[#ffff00]" />
          <Tool icon="ellipse" label="Ellipse" bg="bg-[#ffff00]" />
          <Tool icon="dot" label="Green marker" bg="bg-[#00ee00]" />
          <Tool icon="dot" label="Orange marker" bg="bg-[#ff8800]" />
          <Tool icon="dot" label="Red marker" bg="bg-[#ff0000]" />
          <Tool icon="dot" label="Yellow marker" bg="bg-[#ffff00]" />
          <Tool icon="box" label="Yellow box" bg="bg-[#ffff88]" />
          <Tool icon="box" label="Cyan box" bg="bg-[#99ffff]" />
          <Tool icon="box" label="Pink box" bg="bg-[#ff8888]" />
          <Tool icon="box" label="Green box" bg="bg-[#22ff66]" />
          <TextTool text="Line" cls="w-[46px]" />
          <Tool icon="segment" label="Segment" bg="bg-[#ffff00]" />
        </div>
        <div className="ml-2 flex gap-0.5">
          <Tool icon="hline" label="Green line" bg="bg-[#66ff66]" />
          <Tool icon="hline" label="Yellow line" bg="bg-[#ffff00]" />
          <Tool icon="hline" label="Red line" bg="bg-[#ff0000]" />
          <Tool icon="extended" label="Extended line" />
          <Tool icon="channel" label="Green channel" bg="bg-[#00ff00]" />
          <Tool icon="channel" label="Pink channel" bg="bg-[#ff8888]" />
          <Tool icon="channel" label="Blue channel" bg="bg-[#3399ff]" />
        </div>
        <Pager />
      </div>
    </div>
    <div className="flex h-10 shrink-0 items-start border-b-[3px] border-[#888] bg-white pt-px">
      <button type="button" className={`h-[34px] bg-[#0077dd] px-[3px] text-xl text-white ${SEGOE}`}>MarksChartBookNew</button>
    </div>
    <RightChart />
    <div className="flex h-10 shrink-0 items-start bg-white pt-1 text-[19px]">
      <nav className="grid h-9 min-w-0 flex-1 grid-cols-[77fr_73fr_83fr_99fr_113fr_276fr_149fr_114fr_117fr_105fr_98fr_98fr_113fr_88fr] gap-0.5">
        {rightTabs.map(([name, cls], i) => (
          <button type="button" key={i} className={`min-w-0 overflow-hidden text-center whitespace-pre text-[#221100] ${cls}`}>{name}</button>
        ))}
        <button type="button" className="min-w-0 overflow-hidden border-[6px] border-[#0077dd] bg-[#ff8844] text-center leading-none whitespace-nowrap text-white">NQ 1000 M</button>
        <button type="button" className="pl-12 text-left text-sm font-bold">&lt;</button>
      </nav>
    </div>
    <div className="flex-1 bg-[#ddeeff]" />
  </section>
);

const Caret = () => (
  <svg viewBox="0 0 20 12" className="ml-4 h-3 w-5 shrink-0" fill="#888"><path d="M0 0h20L10 12z" /></svg>
);

const RemoteBar = () => (
  <div className={`absolute top-0 left-[786px] h-[65px] w-[52%] overflow-hidden border-b-[3px] border-[#d0d0d0] bg-[#f1f1f1] text-[34px] text-black ${SEGOE}`}>
    <div className="grid h-[26px] grid-cols-[119fr_230fr_260fr_220fr_384fr_361fr_110fr_89fr] grid-rows-[26px] items-center whitespace-nowrap">
      <button type="button" aria-label="Disconnect" className="pl-7">
        <svg viewBox="0 0 50 56" className="h-14 w-[50px]" stroke="#666" strokeWidth="6" strokeLinecap="round"><path d="M4 4l42 44M46 4L4 48" /></svg>
      </button>
      <button type="button" className="flex items-center gap-5 text-[#222]">
        <svg viewBox="0 0 72 72" className="size-[72px] shrink-0" fill="none">
          <circle cx="36" cy="36" r="30" stroke="#7aa898" strokeWidth="11" />
          <path d="M6 36A30 30 0 0 1 16 14" stroke="#d8d8d8" strokeWidth="11" />
          <path d="M25 29h22M25 38h22" stroke="#bbb" strokeWidth="4" />
        </svg>
        Home
      </button>
      <button type="button" className="flex items-center">
        <svg viewBox="0 0 48 60" className="mr-6 h-[60px] w-12 shrink-0" fill="#eec47c"><path d="M18 0h28L34 22h14L8 58l10-28H2z" /></svg>
        Actions<Caret />
      </button>
      <button type="button" className="flex items-center">
        <svg viewBox="0 0 64 60" className="mr-5 h-[60px] w-16 shrink-0">
          <path d="M6 2h46v24H6z" fill="#fff" stroke="#4a80bb" strokeWidth="6" />
          <path d="M60 6v16L44 34l-6-6z" fill="#666" />
          <path d="M28 34q14-8 20 6 0 18-38 15 12-4 18-21z" fill="#4a80bb" />
        </svg>
        View<Caret />
      </button>
      <button type="button" className="flex items-center">
        <svg viewBox="0 0 72 60" className="mr-6 h-[60px] w-[72px] shrink-0">
          <path d="M12 4q0 36 34 52 10 0 12-12L44 36l-8 4Q26 28 24 16z" fill="#4a80bb" />
          <path d="M32 8h32v18H48l-8 10v-10h-8z" fill="#fff" stroke="#aaa" strokeWidth="3" />
        </svg>
        Communicate<Caret />
      </button>
      <button type="button" className="flex items-center">
        <svg viewBox="0 0 72 60" className="mr-4 h-[60px] w-[72px] shrink-0">
          <path d="M28 42H4V0h30" fill="none" stroke="#888" strokeWidth="4" />
          <path d="M30 26h11q-4-12 5-12t5 12h11v9q12-5 12 4t-12 4v14H50q0-8-5-8t-5 8H30V44q6-2 6-5t-6-5z" fill="#7aa898" />
        </svg>
        Files &amp; Extras<Caret />
      </button>
      <button type="button" aria-label="Remote screen" className="pl-2">
        <svg viewBox="0 0 62 56" className="h-14 w-[62px]" fill="none">
          <path d="M2 4v18h10" stroke="#aaa" strokeWidth="4" />
          <path d="M20 2h38v36H20z" fill="#fff" stroke="#4a80bb" strokeWidth="6" />
          <path d="M30 48h18l4 6H26z" fill="#4a80bb" />
        </svg>
      </button>
      <button type="button" aria-label="Feedback">
        <svg viewBox="0 0 52 52" className="ml-3 size-[52px]">
          <circle cx="26" cy="20" r="25" fill="#fcc21b" />
          <path d="M17 8v8M35 8v8" stroke="#553311" strokeWidth="5" strokeLinecap="round" />
          <path d="M8 23h36q-4 16-18 16T8 23z" fill="#774422" />
          <path d="M12 25h28l-3 6H15z" fill="#fff" />
        </svg>
      </button>
    </div>
  </div>
);

export default function App() {
  return (
    <main className={`relative grid h-screen grid-cols-[1711fr_1633fr_66px] overflow-hidden bg-black ${SEGOE}`}>
      <SkypeWindow />
      <TradingWindow />
      <aside className="bg-[#1a1a1a]" />

      <RemoteBar />
      {/* collapse handle hanging below the remote bar */}
      <div className="absolute top-[62px] left-[2055px] flex h-[57px] w-[152px] items-center border-r-2 border-b-[3px] border-[#d0d0d0] bg-[#f1f1f1]">
        <svg viewBox="0 0 42 54" className="h-full w-[42px] bg-[#cccccc]" fill="#fff">
          {[4, 17, 30, 43].map((y) => [7, 18, 29].map((x) => <rect key={`${x}-${y}`} x={x} y={y} width={7} height={7} />))}
        </svg>
        <button type="button" aria-label="Full screen" className="ml-3">
          <svg viewBox="0 0 30 30" className="size-[30px]" fill="none" stroke="#888" strokeWidth="3">
            <path d="M2 10V2h8M20 2h8v8M28 20v8h-8M10 28H2v-8M3 3l9 9M27 3l-9 9M27 27l-9-9M3 27l9-9" />
          </svg>
        </button>
        <button type="button" aria-label="Collapse" className="ml-4">
          <svg viewBox="0 0 44 26" className="h-[26px] w-11" fill="none" stroke="#888" strokeWidth="7"><path d="M3 22L22 5l19 17" /></svg>
        </button>
      </div>
      <svg viewBox="0 0 16 20" className="absolute bottom-0 left-[2235px] h-5 w-4" fill="#fff" stroke="#222" strokeWidth="1.5">
        <path d="M8 1l7 9h-4v10H5V10H1z" />
      </svg>
      <svg viewBox="0 0 46 91" className="absolute right-[66px] bottom-0 h-[91px] w-[46px]">
        <path d="M0 19v24" stroke="#0b0" strokeWidth="3" />
        <path d="M3 6q0-6 6-6h37v91L3 64z" fill="#555" />
        <rect x="10" y="10" width="35" height="35" fill="#003f6e" />
        <circle cx="27" cy="27" r="15" fill="#777" />
        <path d="M16 27h22M22 21l-6 6 6 6M32 21l6 6-6 6" fill="none" stroke="#003f6e" strokeWidth="4" />
      </svg>
    </main>
  );
}
